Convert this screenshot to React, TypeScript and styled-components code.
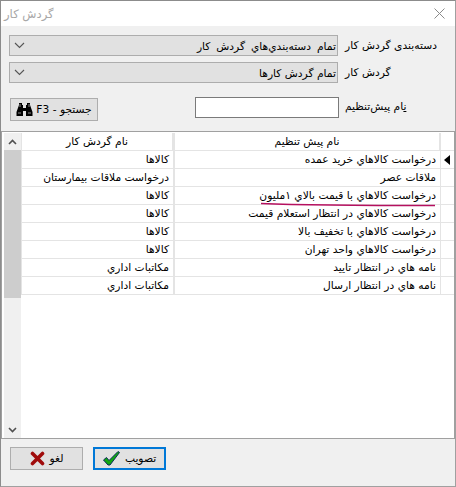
import { createGlobalStyle } from 'styled-components';
import styled from 'styled-components';

const GlobalStyle = createGlobalStyle`
  html, body {
    margin: 0;
    padding: 0;
    background: #f0f0f0;
  }
`;

const Window = styled.div`
  width: 456px;
  height: 487px;
  box-sizing: border-box;
  display: flex;
  flex-direction: column;
  border: 1px solid #8c8c8c;
  border-right-color: #a0a0a0;
  border-bottom-color: #a0a0a0;
  background: #f0f0f0;
  font-family: "DejaVu Sans", Tahoma, sans-serif;
  font-size: 10.7px;
  color: #000;
  overflow: hidden;
`;

const TitleBar = styled.div`
  height: 25px;
  flex-shrink: 0;
  display: flex;
  align-items: center;
  justify-content: space-between;
  padding: 0 10px 0 3px;
  background: #fff;
`;

const Title = styled.div`
  font-size: 11.6px;
  color: #a8a8a8;
  direction: rtl;
`;

const Filters = styled.div`
  height: 105px;
  flex-shrink: 0;
  box-sizing: border-box;
  padding: 9px 0 0 8px;
  display: flex;
  flex-direction: column;
`;

const FieldRow = styled.div<{ $top?: number }>`
  display: flex;
  align-items: center;
  margin-top: ${p => p.$top || 0}px;
`;

const Combo = styled.div`
  width: 329px;
  height: 21px;
  box-sizing: border-box;
  border: 1px solid #adadad;
  background: #e1e1e1;
  display: flex;
  align-items: center;
  justify-content: space-between;
  padding: 0 1px 0 4px;
`;

const ComboText = styled.span<{ $spread?: number }>`
  direction: rtl;
  padding-top: 1px;
  word-spacing: ${p => p.$spread || 0}px;
`;

const FieldLabel = styled.div`
  direction: ltr;
  margin-left: 7px;
  white-space: nowrap;
`;

const SearchRow = styled.div`
  display: flex;
  align-items: flex-start;
  margin-top: 15px;
`;

const SearchButton = styled.div`
  width: 88px;
  height: 23px;
  box-sizing: border-box;
  border: 1px solid #adadad;
  background: #e1e1e1;
  display: flex;
  align-items: center;
  justify-content: center;
  gap: 3px;
  margin-left: 1px;
  white-space: nowrap;
`;

const SearchLabel = styled.span`
  direction: rtl;
`;

const NameInput = styled.div`
  width: 144px;
  height: 21px;
  box-sizing: border-box;
  border: 1px solid #7a7a7a;
  background: #fff;
  margin-left: 97px;
  margin-top: -1px;
`;

const NameLabel = styled(FieldLabel)`
  margin-top: 2px;
  margin-left: 6px;
`;

const TablePanel = styled.div`
  flex: 1;
  display: flex;
  position: relative;
  border: 1px solid #a0a0a0;
  background: #fff;
  padding-top: 1px;
  min-height: 0;
`;

const ScrollBar = styled.div`
  width: 17px;
  margin-left: 2px;
  flex-shrink: 0;
  display: flex;
  flex-direction: column;
  background: #f0f0f0;
`;

const ScrollButton = styled.div`
  height: 17px;
  flex-shrink: 0;
  display: flex;
  align-items: center;
  justify-content: center;
`;

const ScrollThumb = styled.div`
  height: 148px;
  flex-shrink: 0;
  background: #cdcdcd;
`;

const ScrollRest = styled.div`
  flex: 1;
`;

const Grid = styled.div`
  flex: 1;
  min-width: 0;
  display: flex;
  flex-direction: column;
`;

const Row = styled.div`
  display: grid;
  grid-template-columns: 153px 267px 13px;
  height: 18px;
  box-sizing: border-box;
  border-bottom: 1px solid #e4e4e4;
`;

const Cell = styled.div<{ $header?: boolean }>`
  direction: rtl;
  text-align: ${p => (p.$header ? 'center' : 'right')};
  line-height: 17px;
  padding-right: ${p => (p.$header ? 0 : 4)}px;
  white-space: nowrap;
  overflow: hidden;
  box-sizing: border-box;
  border-left: 1px solid #e4e4e4;
  border-right: ${p => (p.$header ? 2 : 1)}px solid #e4e4e4;
`;

const MarkerCell = styled.div`
  display: flex;
  align-items: center;
  justify-content: flex-start;
  padding-left: 3px;
`;

const Marker = styled.div`
  width: 0;
  height: 0;
  border-top: 5px solid transparent;
  border-bottom: 5px solid transparent;
  border-right: 6px solid #000;
`;

const Highlight = styled.svg`
  position: absolute;
  left: 258px;
  top: 70px;
`;

const Footer = styled.div`
  height: 39px;
  flex-shrink: 0;
  display: flex;
  align-items: flex-start;
  gap: 10px;
  padding: 8px 0 0 9px;
`;

const ActionButton = styled.div<{ $primary?: boolean }>`
  width: 73px;
  height: 23px;
  box-sizing: border-box;
  border: ${p => (p.$primary ? '2px solid #0078d7' : '1px solid #adadad')};
  background: #e1e1e1;
  display: flex;
  align-items: center;
  justify-content: center;
  gap: 5px;
  direction: rtl;
`;

const rows = [
  ['کالاها', 'درخواست کالاهاي خرید عمده'],
  ['درخواست ملاقات بیمارستان', 'ملاقات عصر'],
  ['کالاها', 'درخواست کالاهاي با قیمت بالاي ۱ملیون'],
  ['کالاها', 'درخواست کالاهاي در انتظار استعلام قیمت'],
  ['کالاها', 'درخواست کالاهاي با تخفیف بالا'],
  ['کالاها', 'درخواست کالاهاي واحد تهران'],
  ['مکاتبات اداري', 'نامه هاي در انتظار تایید'],
  ['مکاتبات اداري', 'نامه هاي در انتظار ارسال'],
];

const Chevron = ({ color = '#555' }: { color?: string }) => (
  <svg width="11" height="7" viewBox="0 0 11 7">
    <path d="M1 1 L5.5 5.5 L10 1" fill="none" stroke={color} strokeWidth="1.1" />
  </svg>
);

const App = () => (
  <>
    <GlobalStyle />
    <Window>
      <TitleBar>
        <Title>گردش کار</Title>
        <svg width="11" height="11" viewBox="0 0 11 11">
          <path d="M0.5 0.5 L10.5 10.5 M10.5 0.5 L0.5 10.5" stroke="#8a8a8a" strokeWidth="1" />
        </svg>
      </TitleBar>
      <Filters>
        <FieldRow>
          <Combo>
            <Chevron />
            <ComboText $spread={2.5}>تمام دسته‌بندي‌هاي گردش کار</ComboText>
          </Combo>
          <FieldLabel>دسته‌بندی گردش کار</FieldLabel>
        </FieldRow>
        <FieldRow $top={6}>
          <Combo>
            <Chevron />
            <ComboText>تمام گردش کارها</ComboText>
          </Combo>
          <FieldLabel>گردش کار</FieldLabel>
        </FieldRow>
        <SearchRow>
          <SearchButton>
            <svg width="17" height="15" viewBox="0 0 17 15">
              <path d="M3 1h3v2h1v3h3V3h1V1h3v2l2.500 7v4h-6.500V9H7v5H0.500v-4L3 3z" fill="#000" />
              <path d="M2 11h3M12 11h3M4 2v3M13 2v3" stroke="#8a8a8a" strokeWidth="1" />
            </svg>
            <SearchLabel>جستجو - F3</SearchLabel>
          </SearchButton>
          <NameInput />
          <NameLabel><u>ن</u>ام پیش‌تنظیم</NameLabel>
        </SearchRow>
      </Filters>
      <TablePanel>
        <ScrollBar>
          <ScrollButton>
            <svg width="9" height="6" viewBox="0 0 9 6">
              <path d="M1 5 L4.5 1.500 L8 5" fill="none" stroke="#505050" strokeWidth="1.6" />
            </svg>
          </ScrollButton>
          <ScrollThumb />
          <ScrollRest />
          <ScrollButton>
            <svg width="9" height="6" viewBox="0 0 9 6">
              <path d="M1 1 L4.5 4.500 L8 1" fill="none" stroke="#505050" strokeWidth="1.6" />
            </svg>
          </ScrollButton>
        </ScrollBar>
        <Grid>
          <Row>
            <Cell $header>نام گردش کار</Cell>
            <Cell $header>نام پیش تنظیم</Cell>
            <MarkerCell />
          </Row>
          {rows.map((row, i) => (
            <Row key={i}>
              <Cell>{row[0]}</Cell>
              <Cell>{row[1]}</Cell>
              <MarkerCell>{i === 0 && <Marker />}</MarkerCell>
            </Row>
          ))}
        </Grid>
        <Highlight width="176" height="5" viewBox="0 0 176 5">
          <path d="M1 1.500 C40 3 120 3.500 175 3.500" fill="none" stroke="#b5105f" strokeWidth="1.5" />
        </Highlight>
      </TablePanel>
      <Footer>
        <ActionButton>
          <span>لغو</span>
          <svg width="15" height="15" viewBox="0 0 15 15">
            <path d="M2.500 2.500 L12.500 12.500 M12.500 2.500 L2.500 12.500" stroke="#a00c0c" strokeWidth="3.6" strokeLinecap="round" />
          </svg>
        </ActionButton>
        <ActionButton $primary>
          <span>تصویب</span>
          <svg width="17" height="15" viewBox="0 0 17 15">
            <path d="M0.500 9 L3.500 6.500 L6 9.500 L15 0.500 L16.500 1.500 L7 14 L5 14 Z" fill="#10a810" stroke="#0c2a5c" strokeWidth="1" strokeLinejoin="round" />
          </svg>
        </ActionButton>
      </Footer>
    </Window>
  </>
);

export default App;
